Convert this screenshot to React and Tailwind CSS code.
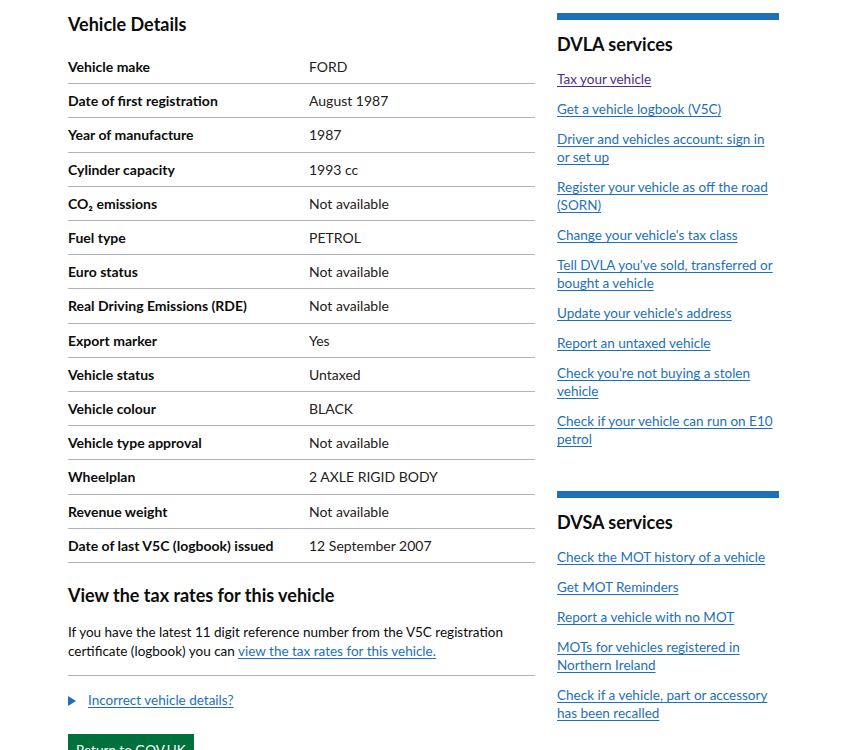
const vehicleDetails = [
  ['Vehicle make', 'FORD'],
  ['Date of first registration', 'August 1987'],
  ['Year of manufacture', '1987'],
  ['Cylinder capacity', '1993 cc'],
  ['CO₂ emissions', 'Not available'],
  ['Fuel type', 'PETROL'],
  ['Euro status', 'Not available'],
  ['Real Driving Emissions (RDE)', 'Not available'],
  ['Export marker', 'Yes'],
  ['Vehicle status', 'Untaxed'],
  ['Vehicle colour', 'BLACK'],
  ['Vehicle type approval', 'Not available'],
  ['Wheelplan', '2 AXLE RIGID BODY'],
  ['Revenue weight', 'Not available'],
  ['Date of last V5C (logbook) issued', '12 September 2007'],
];

const dvlaLinks = [
  { label: 'Tax your vehicle', visited: true },
  { label: 'Get a vehicle logbook (V5C)' },
  { label: 'Driver and vehicles account: sign in or set up' },
  { label: 'Register your vehicle as off the road (SORN)' },
  { label: "Change your vehicle's tax class" },
  { label: "Tell DVLA you've sold, transferred or bought a vehicle" },
  { label: "Update your vehicle's address" },
  { label: 'Report an untaxed vehicle' },
  { label: "Check you're not buying a stolen vehicle" },
  { label: 'Check if your vehicle can run on E10 petrol' },
];

const dvsaLinks = [
  { label: 'Check the MOT history of a vehicle' },
  { label: 'Get MOT Reminders' },
  { label: 'Report a vehicle with no MOT' },
  { label: 'MOTs for vehicles registered in Northern Ireland' },
  { label: 'Check if a vehicle, part or accessory has been recalled' },
];

function ServiceList({ title, links }) {
  return (
    <div>
      <div className="h-[7px] bg-[#1d70b8]" />
      <h2 className="mt-[13px] text-[18px] leading-[22px] font-bold text-[#0b0c0c]">{title}</h2>
      <ul className="mt-[15px] flex flex-col gap-[12px]">
        {links.map((link) => (
          <li key={link.label} className="text-[13.5px] leading-[18px]">
            <a
              href="#"
              className={`underline underline-offset-2 decoration-1 ${
                link.visited ? 'text-[#4c2c92]' : 'text-[#1d70b8]'
              }`}
            >
              {link.label}
            </a>
          </li>
        ))}
      </ul>
    </div>
  );
}

export default function App() {
  return (
    <div className="min-h-screen bg-white font-['Lato',sans-serif] text-[#0b0c0c]">
      <div className="flex gap-[22px] pl-[68px] pt-[13px]">
        <main className="w-[467px] shrink-0">
          <h1 className="text-[18px] leading-[22px] font-bold">Vehicle Details</h1>

          <dl className="mt-[15px]">
            {vehicleDetails.map(([key, value]) => (
              <div key={key} className="flex border-b border-[#b1b4b6] py-[7px] text-[14px] leading-[19.2px]">
                <dt className="w-[241px] shrink-0 font-bold">{key}</dt>
                <dd className="text-[#1f2020]">{value}</dd>
              </div>
            ))}
          </dl>

          <h2 className="mt-[21px] text-[18px] leading-[22px] font-bold">View the tax rates for this vehicle</h2>
          <p className="mt-[17px] text-[13.5px] leading-[19px]">
            If you have the latest 11 digit reference number from the V5C registration certificate (logbook) you can{' '}
            <a href="#" className="text-[#1d70b8] underline underline-offset-2 decoration-1">
              view the tax rates for this vehicle.
            </a>
          </p>
          <hr className="mt-[14px] border-t border-[#b1b4b6]" />

          <div className="mt-[15px] flex items-center gap-[12px] text-[13.5px] leading-[19px]">
            <svg width="8" height="10" viewBox="0 0 8 10" className="text-[#1d70b8]">
              <path d="M0 0 L8 5 L0 10 Z" fill="currentColor" />
            </svg>
            <a href="#" className="text-[#1d70b8] underline underline-offset-2 decoration-1">
              Incorrect vehicle details?
            </a>
          </div>

          <button className="mt-[24px] bg-[#00703c] px-[8px] pt-[7px] pb-[8px] text-[13.5px] leading-[19px] text-white shadow-[0_2px_0_#002d18]">
            Return to GOV.UK
          </button>
        </main>

        <aside className="w-[222px] shrink-0 flex flex-col gap-[43px]">
          <ServiceList title="DVLA services" links={dvlaLinks} />
          <ServiceList title="DVSA services" links={dvsaLinks} />
        </aside>
      </div>
    </div>
  );
}
